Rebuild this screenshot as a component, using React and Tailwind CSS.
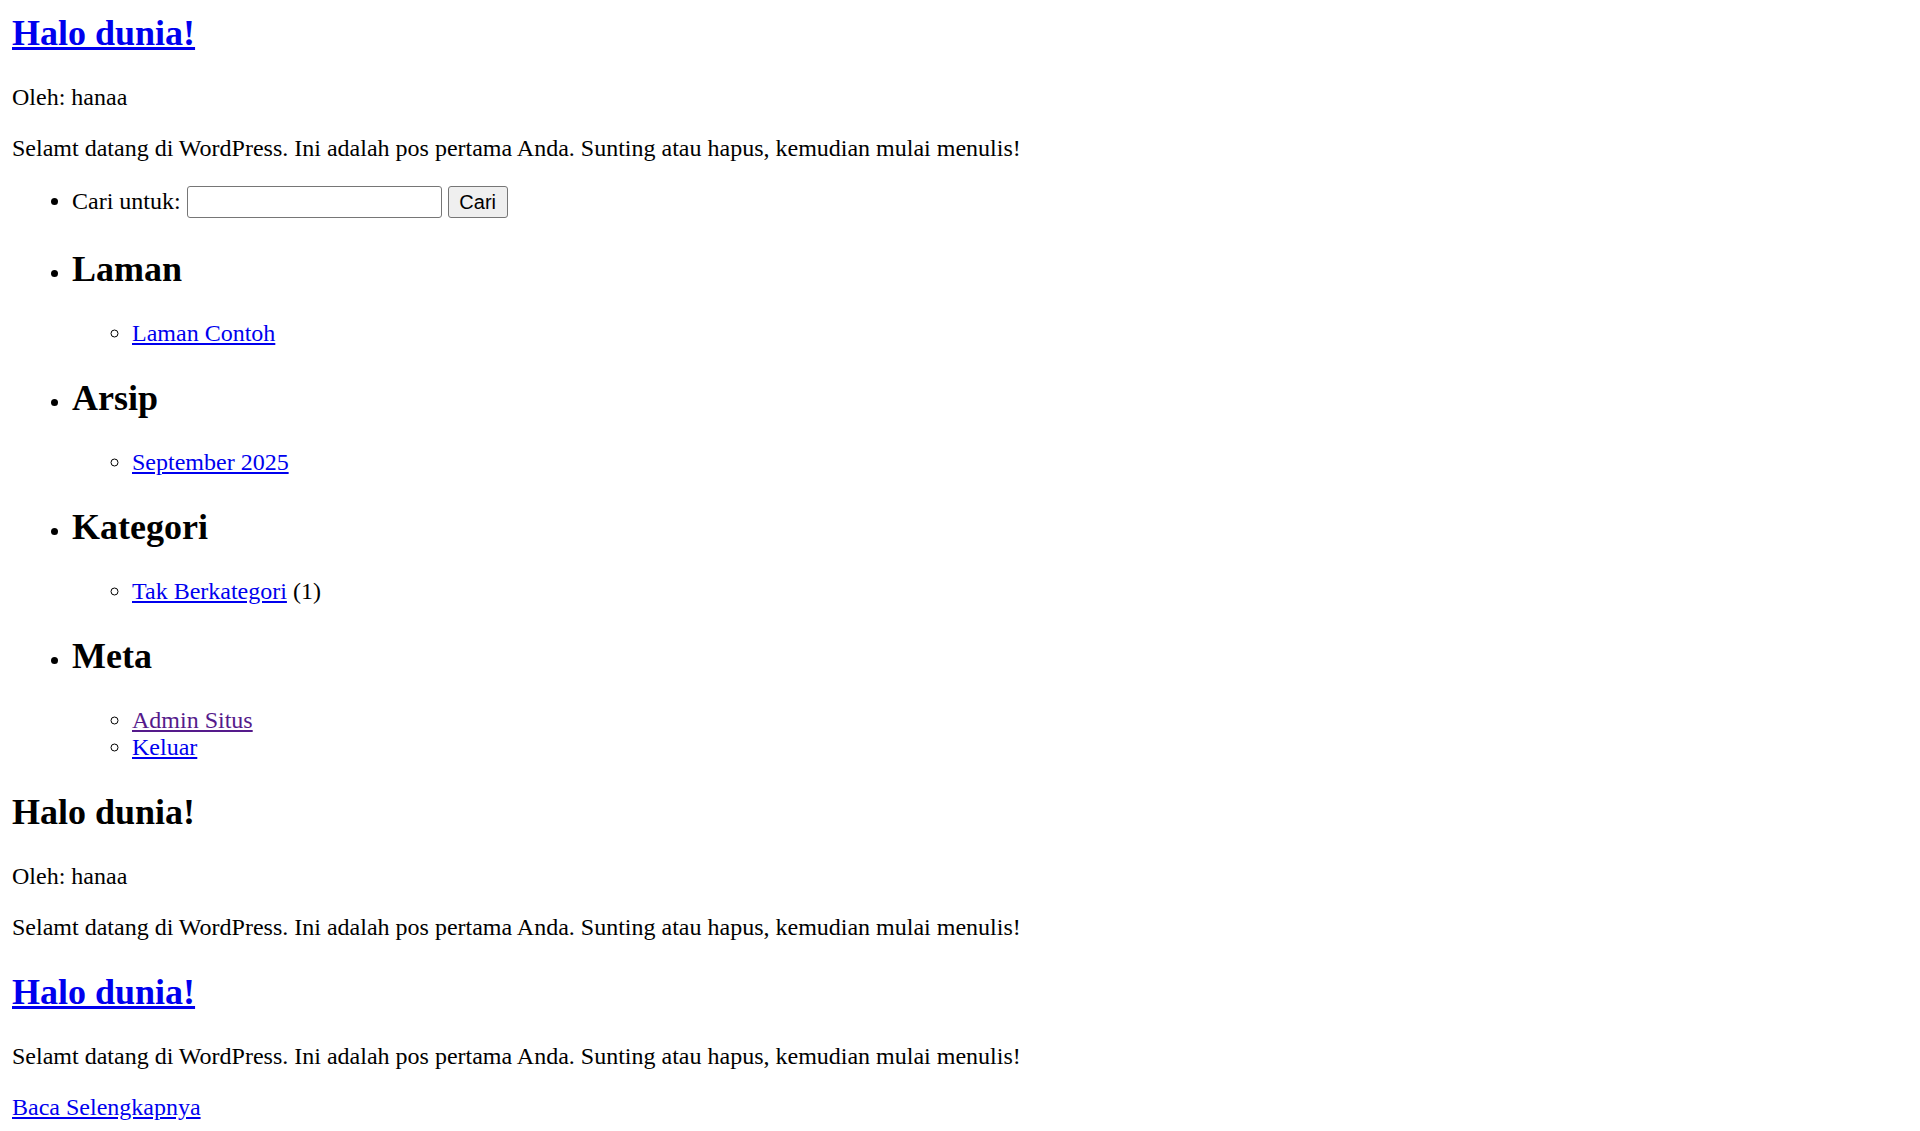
export default function App() {
  const link = "text-[#0000ee] underline";
  return (
    <div className="bg-white text-black px-[12px] pt-[12px] pb-[12px] text-[24px] leading-[normal] min-h-screen" style={{ fontFamily: '"Liberation Serif", "Times New Roman", serif' }}>
      {/* first post */}
      <h2 className="text-[36px] font-bold leading-[normal] mt-0 mb-[30px]">
        <a href="#" className={link}>Halo dunia!</a>
      </h2>
      <p className="my-[24px]">Oleh: hanaa</p>
      <p className="my-[24px]">Selamt datang di WordPress. Ini adalah pos pertama Anda. Sunting atau hapus, kemudian mulai menulis!</p>

      {/* sidebar widgets */}
      <ul className="list-disc pl-[60px] my-[24px]">
        <li>
          <form className="inline">
            <label>Cari untuk:</label>{" "}
            <input
              type="text"
              className="w-[255px] h-[32px] border-[1.5px] border-[#767676] rounded-[3px] bg-white px-[3px] text-[20px] align-baseline"
              style={{ fontFamily: '"Liberation Sans", Arial, sans-serif' }}
            />{" "}
            <button
              type="button"
              className="w-[60px] h-[32px] border-[1.5px] border-[#767676] rounded-[3px] bg-[#efefef] text-[20px] text-black align-baseline"
              style={{ fontFamily: '"Liberation Sans", Arial, sans-serif' }}
            >
              Cari
            </button>
          </form>
        </li>
        <li>
          <h2 className="text-[36px] font-bold leading-[normal] my-[30px]">Laman</h2>
          <ul className="list-[circle] pl-[60px] my-0">
            <li><a href="#" className={link}>Laman Contoh</a></li>
          </ul>
        </li>
        <li>
          <h2 className="text-[36px] font-bold leading-[normal] my-[30px]">Arsip</h2>
          <ul className="list-[circle] pl-[60px] my-0">
            <li><a href="#" className={link}>September 2025</a></li>
          </ul>
        </li>
        <li>
          <h2 className="text-[36px] font-bold leading-[normal] my-[30px]">Kategori</h2>
          <ul className="list-[circle] pl-[60px] my-0">
            <li><a href="#" className={link}>Tak Berkategori</a> (1)</li>
          </ul>
        </li>
        <li>
          <h2 className="text-[36px] font-bold leading-[normal] my-[30px]">Meta</h2>
          <ul className="list-[circle] pl-[60px] my-0">
            <li><a href="#" className="text-[#551a8b] underline">Admin Situs</a></li>
            <li><a href="#" className={link}>Keluar</a></li>
          </ul>
        </li>
      </ul>

      {/* single post */}
      <h2 className="text-[36px] font-bold leading-[normal] my-[30px]">Halo dunia!</h2>
      <p className="my-[24px]">Oleh: hanaa</p>
      <p className="my-[24px]">Selamt datang di WordPress. Ini adalah pos pertama Anda. Sunting atau hapus, kemudian mulai menulis!</p>

      {/* excerpt */}
      <h2 className="text-[36px] font-bold leading-[normal] my-[30px]">
        <a href="#" className={link}>Halo dunia!</a>
      </h2>
      <p className="my-[24px]">Selamt datang di WordPress. Ini adalah pos pertama Anda. Sunting atau hapus, kemudian mulai menulis!</p>
      <p className="my-[24px]"><a href="#" className={link}>Baca Selengkapnya</a></p>
    </div>
  );
}
